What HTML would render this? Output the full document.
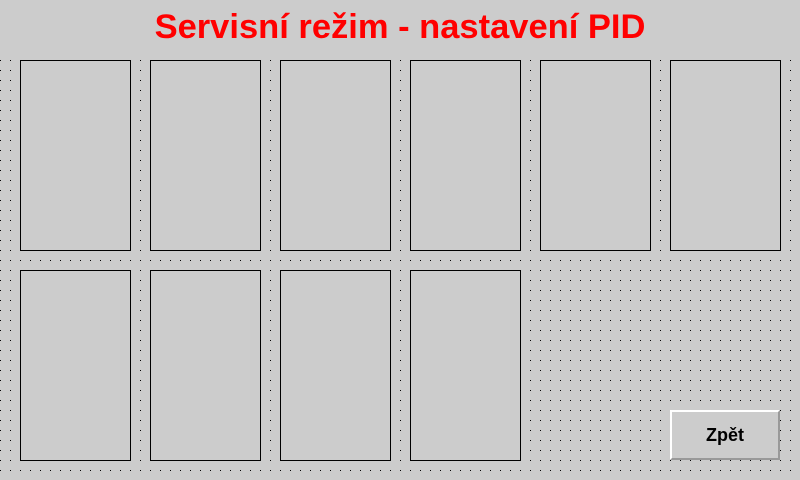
<!DOCTYPE html>
<html><head><meta charset="utf-8"><style>
html,body{margin:0;padding:0}
body{width:800px;height:480px;background:#cccccc;position:relative;overflow:hidden;font-family:"Liberation Sans",sans-serif}
.t{position:absolute;left:0;top:7px;width:800px;text-align:center;color:#ff0000;font-weight:bold;font-size:34.5px;line-height:40px}
.p{position:absolute;width:109px;height:189px;border:1px solid #000;background:#cccccc}
.b{position:absolute;left:670px;top:410px;width:106px;height:46px;border-top:2px solid #fff;border-left:2px solid #fff;border-right:2px solid #999;border-bottom:2px solid #999;background:#cccccc;text-align:center;line-height:46px;font-weight:bold;font-size:18px}
</style></head><body>
<svg style="position:absolute;left:0;top:60px" width="800" height="420"><defs><pattern id="d" width="10" height="10" patternUnits="userSpaceOnUse"><rect x="0" y="0" width="1" height="1" fill="#000"/></pattern></defs><rect width="800" height="420" fill="url(#d)"/></svg>
<div class="t">Servisní režim - nastavení PID</div>
<div class="p" style="left:20px;top:60px"></div>
<div class="p" style="left:150px;top:60px"></div>
<div class="p" style="left:280px;top:60px"></div>
<div class="p" style="left:410px;top:60px"></div>
<div class="p" style="left:540px;top:60px"></div>
<div class="p" style="left:670px;top:60px"></div>
<div class="p" style="left:20px;top:270px"></div>
<div class="p" style="left:150px;top:270px"></div>
<div class="p" style="left:280px;top:270px"></div>
<div class="p" style="left:410px;top:270px"></div>
<div class="b">Zpět</div>
</body></html>
